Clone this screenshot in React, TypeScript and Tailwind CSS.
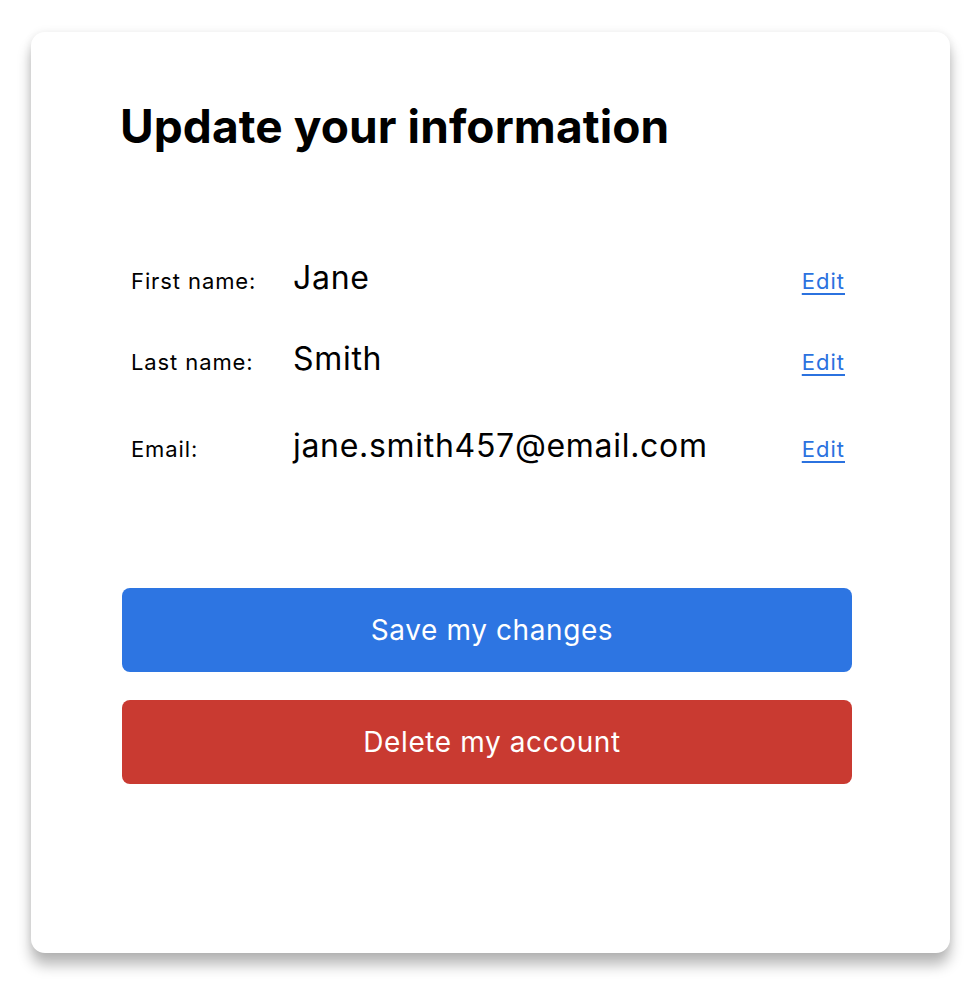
const rows = [
  { label: "First name:", value: "Jane" },
  { label: "Last name:", value: "Smith" },
  { label: "Email:", value: "jane.smith457@email.com" },
];

export default function App() {
  return (
    <div className="min-h-screen bg-white pt-[32px] pl-[31px] font-['Inter',sans-serif] text-black">
      <div className="w-[919px] h-[921px] rounded-[14px] bg-white shadow-[0_12px_14px_rgba(0,0,0,0.28),0_0_8px_rgba(0,0,0,0.08)] pl-[89px] pt-[66px]">
        <h1 className="text-[46px] font-bold leading-[56px] tracking-[0.1px]">Update your information</h1>

        <div className="mt-[104px] w-[724px] flex flex-col">
          {rows.map((r, i) => (
            <div
              key={r.label}
              className={
                "flex items-baseline " +
                (i === 0 ? "" : i === 1 ? "mt-[41px]" : "mt-[47px]")
              }
            >
              <span className="w-[173px] pl-[11px] text-[22px] tracking-[0.9px]">{r.label}</span>
              <span className="flex-1 text-[32px] leading-[40px] tracking-[0.7px]">{r.value}</span>
              <a href="#" className="text-[22px] tracking-[1px] -mr-[1px] text-[#2b72df] underline underline-offset-4">
                Edit
              </a>
            </div>
          ))}
        </div>

        <div className="mt-[122px] w-[732px] flex flex-col gap-[28px] pl-[2px]">
          <button className="h-[84px] rounded-[8px] bg-[#2d75e2] pl-[10px] text-white text-[28px] tracking-[0.6px]">Save my changes</button>
          <button className="h-[84px] rounded-[8px] bg-[#c93a31] pl-[10px] text-white text-[28px] tracking-[0.6px]">Delete my account</button>
        </div>
      </div>
    </div>
  );
}
